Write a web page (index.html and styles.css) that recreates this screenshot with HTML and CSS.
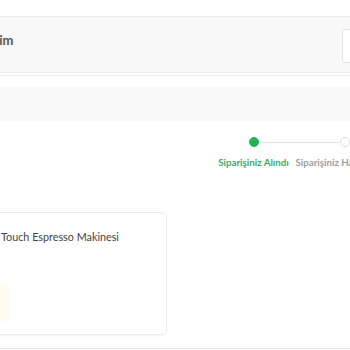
FILE: index.html
```html
<!DOCTYPE html>
<html lang="tr">
<head>
    <meta charset="UTF-8">
    <meta name="viewport" content="width=device-width, initial-scale=1.0">
    <title>Siparişlerim</title>
    <link rel="stylesheet" href="styles.css">
</head>
<body>

    <header class="top-bar"></header>

    <section class="page-head">
        <h1 class="page-title">Siparişlerim</h1>
        <div class="head-box"></div>
    </section>
    <div class="rule"></div>

    <div class="filter-band"></div>

    <section class="tracker">
        <div class="step done">
            <div class="step-track">
                <span class="track-line"></span>
                <span class="dot"></span>
                <span class="track-line"></span>
            </div>
            <div class="step-label"><span>Siparişiniz Alındı</span></div>
        </div>
        <div class="step">
            <div class="step-track">
                <span class="track-line"></span>
                <span class="dot"></span>
                <span class="track-line"></span>
            </div>
            <div class="step-label"><span>Siparişiniz Hazırlanıyor</span></div>
        </div>
        <div class="step">
            <div class="step-track">
                <span class="track-line"></span>
                <span class="dot"></span>
                <span class="track-line"></span>
            </div>
            <div class="step-label"><span>Kargoya Verildi</span></div>
        </div>
    </section>

    <section class="order-card">
        <div class="product-thumb"></div>
        <div class="product-info">
            <p class="product-name">Touch Espresso Makinesi</p>
            <div class="swatch"></div>
        </div>
    </section>

    <div class="bottom-rule"></div>

</body>
</html>
```

FILE: styles.css
```css
html, body {
    overflow: hidden;
}
body {
    font-family: Lato, 'Liberation Sans', sans-serif;
    margin: 0;
    padding: 0;
    background-color: #ffffff;
    color: #444;
    width: 350px;
}
.top-bar {
    height: 16px;
    border-bottom: 1px solid #ececec;
}
.page-head {
    height: 55px;
    background-color: #f8f8f8;
    border-bottom: 1px solid #ececec;
    display: flex;
    justify-content: space-between;
    align-items: flex-start;
}
.page-title {
    margin: 15px 0 0 -54px;
    font-size: 13px;
    font-weight: bold;
    color: #555;
    white-space: nowrap;
}
.head-box {
    width: 30px;
    height: 32px;
    margin: 12px -24px 0 0;
    background-color: #ffffff;
    border: 1px solid #e2e2e2;
    border-radius: 3px;
}
.rule {
    margin-top: 2px;
    height: 1px;
    background-color: #efefef;
}
.filter-band {
    margin-top: 11px;
    height: 34px;
    background-color: #f9f9f9;
}
.tracker {
    display: grid;
    grid-template-columns: repeat(3, 91px);
    margin: 16px 0 0 208px;
    width: 273px;
}
.step {
    display: flex;
    flex-direction: column;
}
.step-track {
    display: flex;
    align-items: center;
    height: 10px;
}
.track-line {
    flex: 1;
    height: 1px;
    background-color: #e0e0e0;
}
.step:first-child .track-line:first-child {
    background-color: transparent;
}
.dot {
    width: 8px;
    height: 8px;
    border-radius: 50%;
    border: 1px solid #dcdcdc;
    background-color: #ffffff;
    margin: 0 1px;
}
.step.done .dot {
    background-color: #1db451;
    border-color: #1db451;
}
.step-label {
    display: flex;
    justify-content: center;
    margin-top: 9px;
    font-size: 9.7px;
    font-weight: bold;
    color: #a0a0a0;
    white-space: nowrap;
}
.step.done .step-label {
    color: #3aab6a;
}
.order-card {
    display: flex;
    width: 190px;
    height: 121px;
    margin: 44px 0 0 -25px;
    border: 1px solid #ececec;
    border-radius: 5px;
    box-shadow: 0 1px 2px rgba(0, 0, 0, 0.04);
}
.product-thumb {
    width: 24px;
}
.product-info {
    flex: 1;
    display: flex;
    flex-direction: column;
}
.product-name {
    margin: 17px 0 0 1px;
    font-size: 10.8px;
    color: #444;
    white-space: nowrap;
}
.swatch {
    width: 9px;
    height: 36px;
    margin-top: 42px;
    background-color: #fffcef;
    border-radius: 0 4px 4px 0;
}
.bottom-rule {
    margin-top: 13px;
    height: 1px;
    background-color: #e8e8e8;
}
```
